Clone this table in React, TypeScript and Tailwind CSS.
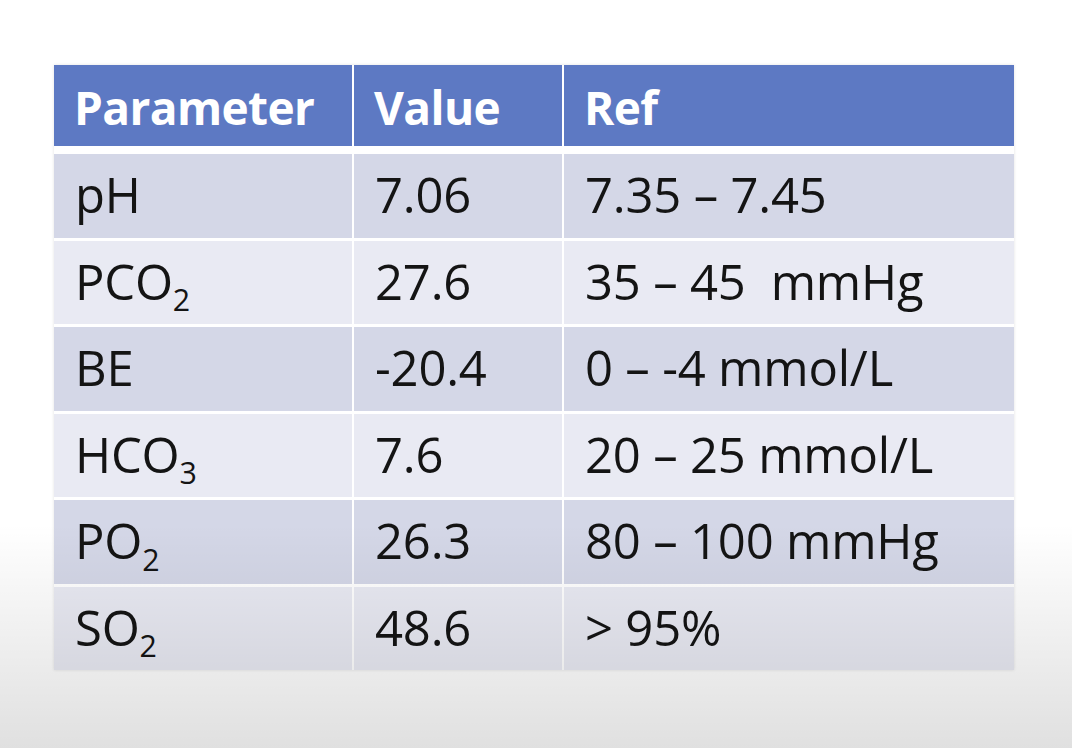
import React from "react";

type Row = { p: React.ReactNode; v: string; r: string; dark: boolean };

const Sub = ({ children }: { children: React.ReactNode }) => (
  <sub className="text-[0.62em] bottom-[-0.38em] leading-none">{children}</sub>
);

const rows: Row[] = [
  { p: <>pH</>, v: "7.06", r: "7.35 – 7.45", dark: true },
  { p: <>PCO<Sub>2</Sub></>, v: "27.6", r: "35 – 45  mmHg", dark: false },
  { p: <>BE</>, v: "-20.4", r: "0 – -4 mmol/L", dark: true },
  { p: <>HCO<Sub>3</Sub></>, v: "7.6", r: "20 – 25 mmol/L", dark: false },
  { p: <>PO<Sub>2</Sub></>, v: "26.3", r: "80 – 100 mmHg", dark: true },
  { p: <>SO<Sub>2</Sub></>, v: "48.6", r: "> 95%", dark: false },
];

export default function App() {
  return (
    <div
      className="relative w-[1072px] h-[748px] overflow-hidden bg-white text-[#141414]"
      style={{ fontFamily: '"Open Sans", "Noto Sans", sans-serif' }}
    >
      <div className="pt-[65px] pl-[54px]">
        <div className="w-[960px] shadow-[0_0_3px_rgba(0,0,0,0.12)]">
          <div className="grid grid-cols-[298px_208px_450px] gap-x-[2px] bg-white">
            {["Parameter", "Value", "Ref"].map((h) => (
              <div
                key={h}
                className="h-[81px] bg-[#5d79c3] flex items-center pl-[20px] text-white font-bold text-[46px] leading-none tracking-[-0.6px]"
              >
                <span className="mt-[2px]">{h}</span>
              </div>
            ))}
          </div>
          <div className="h-[8px] bg-white" />
          <div className="grid grid-cols-[298px_208px_450px] gap-x-[2px] gap-y-[3px] bg-white">
            {rows.map((row, i) => (
              <React.Fragment key={i}>
                {[row.p, row.v, row.r].map((c, j) => (
                  <div
                    key={j}
                    className={`h-[83.5px] flex items-center pl-[21px] text-[49px] leading-none whitespace-pre tracking-[-0.2px] ${
                      row.dark ? "bg-[#d4d7e7]" : "bg-[#e9eaf3]"
                    }`}
                  >
                    <span className="mt-[-2px]">{c}</span>
                  </div>
                ))}
              </React.Fragment>
            ))}
          </div>
        </div>
      </div>
      <div className="pointer-events-none absolute inset-0 bg-linear-to-b from-transparent from-[70%] to-[rgba(0,0,0,0.12)]" />
    </div>
  );
}
